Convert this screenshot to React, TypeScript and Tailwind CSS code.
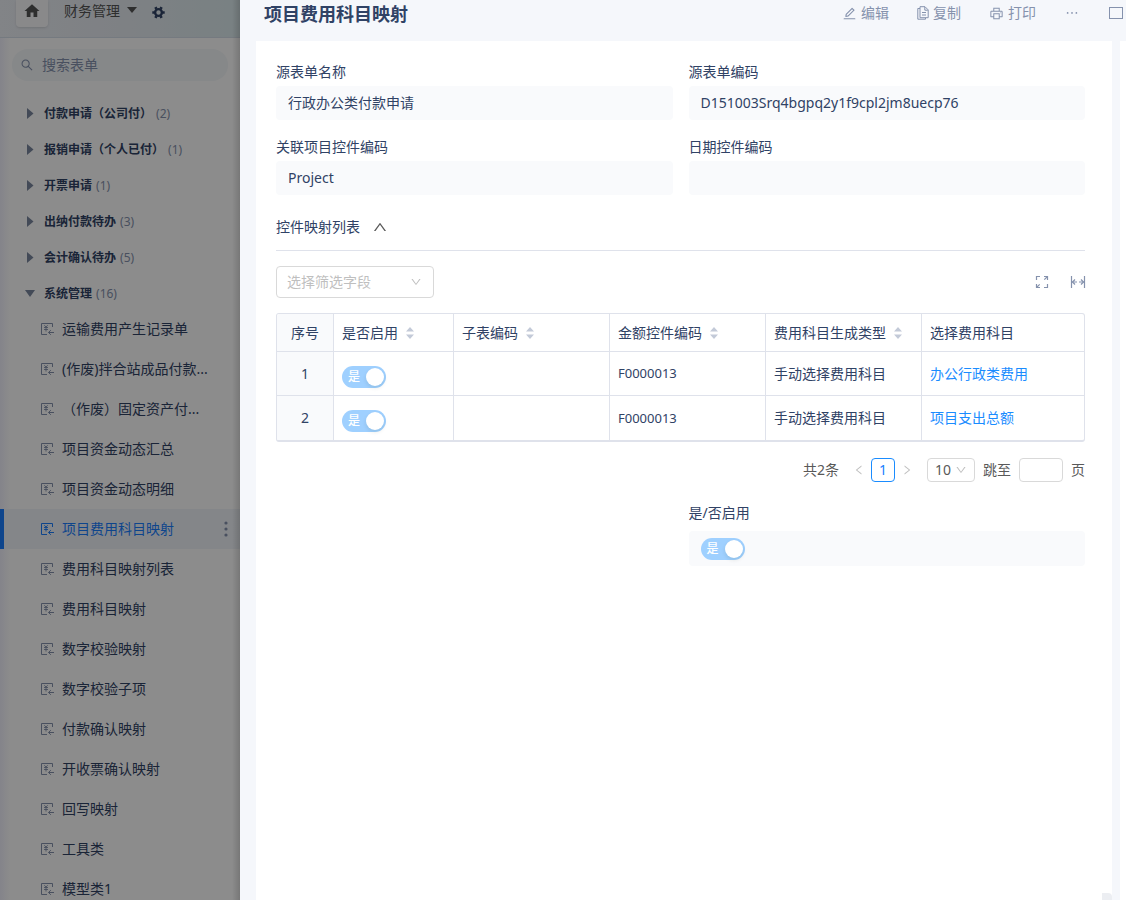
import { useState } from 'react';
import {
  AiOutlineDown,
  AiOutlineEdit,
  AiOutlineEllipsis,
  AiOutlineLeft,
  AiOutlinePrinter,
  AiOutlineRight,
  AiOutlineSearch,
  AiOutlineUp,
} from 'react-icons/ai';
import { MdHome } from 'react-icons/md';
import clsx from 'clsx';

const groups = [
  { name: '付款申请（公司付）', count: 2 },
  { name: '报销申请（个人已付）', count: 1 },
  { name: '开票申请', count: 1 },
  { name: '出纳付款待办', count: 3 },
  { name: '会计确认待办', count: 5 },
  { name: '系统管理', count: 16, open: true },
];

const forms = [
  '运输费用产生记录单',
  '(作废)拌合站成品付款...',
  '（作废）固定资产付...',
  '项目资金动态汇总',
  '项目资金动态明细',
  '项目费用科目映射',
  '费用科目映射列表',
  '费用科目映射',
  '数字校验映射',
  '数字校验子项',
  '付款确认映射',
  '开收票确认映射',
  '回写映射',
  '工具类',
  '模型类1',
];

const columns = [
  { title: '是否启用', sortable: true },
  { title: '子表编码', sortable: true },
  { title: '金额控件编码', sortable: true },
  { title: '费用科目生成类型', sortable: true },
  { title: '选择费用科目', sortable: false },
];

const rows = [
  { child: '', amount: 'F0000013', type: '手动选择费用科目', subject: '办公行政类费用' },
  { child: '', amount: 'F0000013', type: '手动选择费用科目', subject: '项目支出总额' },
];

function FormIcon() {
  return (
    <svg width="13" height="13" viewBox="0 0 13 13" fill="none" stroke="currentColor" className="shrink-0">
      <path d="M11.5 4V.5H.5v11H6" />
      <path d="M3.3 2.2l1.7 1.8 1.7-1.8M3 4.5h4M3 6.5h4M5 4.5V8.5" strokeWidth=".9" />
      <path d="M13 9.5H7.5M9.8 7.2L7.5 9.5l2.3 2.3" />
    </svg>
  );
}

function GearIcon() {
  return (
    <svg width="13" height="13" viewBox="0 0 13 13" fill="none" stroke="currentColor">
      <circle cx="6.5" cy="6.5" r="3.4" strokeWidth="2.4" />
      <path d="M.3 6.5h2M10.7 6.5h2M3.4 1.1l1 1.8M8.6 10.1l1 1.8M9.6 1.1l-1 1.8M4.4 10.1l-1 1.8" strokeWidth="2.6" />
    </svg>
  );
}

function CopyIcon() {
  return (
    <svg width="12" height="14" viewBox="0 0 12 14" fill="none" stroke="currentColor">
      <path d="M3 2.5H.8v10.7h7.7V11.8" />
      <path d="M3 .7h5l3.2 3.2v7.8H3z" />
      <path d="M7.8 1v3.2h3M5 6.5h4M5 9h4" />
    </svg>
  );
}

function ExpandIcon() {
  return (
    <svg width="14" height="14" viewBox="0 0 14 14" fill="none" stroke="currentColor" strokeWidth="1.2">
      <path d="M1.5 5V1.5H5M9 1.5h3.5V5M12.5 9v3.5H9M5 12.5H1.5V9" />
      <path d="M12.5 1.5L9.3 4.7M1.5 12.5l3.2-3.2" />
    </svg>
  );
}

function FitWidthIcon() {
  return (
    <svg width="16" height="14" viewBox="0 0 16 14" fill="none" stroke="currentColor" strokeWidth="1.2">
      <path d="M1.5 1v12M14.5 1v12M2 7h5M9 7h5" />
      <path d="M5 4.5L2.5 7 5 9.5M11 4.5L13.5 7 11 9.5" />
    </svg>
  );
}

function SortIcon() {
  return (
    <svg width="8" height="12" viewBox="0 0 8 12" fill="#c3cad8">
      <path d="M4 0l4 4.5H0zM4 12l4-4.5H0z" />
    </svg>
  );
}

function Switch({ label }: { label: string }) {
  return (
    <label className="flex h-[22px] w-11 items-center justify-between rounded-full bg-[#9fd0ff] pr-0.5 pl-1.5">
      <input type="checkbox" role="switch" className="sr-only" aria-label={label} checked disabled readOnly />
      <span className="text-xs font-medium text-white">是</span>
      <span className="size-[18px] rounded-full bg-white shadow-[0_2px_4px_rgba(0,35,11,0.1)]" />
    </label>
  );
}

function Field({ id, label, value }: { id: string; label: string; value: string }) {
  return (
    <div className="flex flex-col gap-[3px]">
      <label htmlFor={id} className="leading-[22px]">
        {label}
      </label>
      <input id={id} readOnly value={value} className="h-[34px] w-full rounded bg-[#f9fafc] px-3 pb-0.5 outline-none" />
    </div>
  );
}

function Sidebar() {
  const [active, setActive] = useState('项目费用科目映射');

  return (
    <aside className="relative flex h-screen w-60 shrink-0 flex-col overflow-hidden bg-[linear-gradient(90deg,#f0f0fc,#fff_10px)]">
      <header className="flex h-[38px] shrink-0 items-start border-b border-[#d5dfea] bg-linear-to-r from-[#edf0f6] via-[#e6ebf1] to-[#dcebee] pl-4">
        <button aria-label="首页" className="flex h-[27px] w-8 justify-center rounded-b bg-white/70 pt-0.5 text-[#555] shadow-sm">
          <MdHome size={18} />
        </button>
        <button className="ml-4 flex items-center text-sm leading-[22px] text-[#555]">
          财务管理
          <svg width="10" height="6" viewBox="0 0 10 6" className="mb-0.5 ml-[7px]" fill="currentColor">
            <path d="M0 0h10L5 6z" />
          </svg>
        </button>
        <button aria-label="设置" className="ml-[15px] pt-1.5 text-[#304265]">
          <GearIcon />
        </button>
      </header>

      <label className="mx-3 mt-[11px] flex h-8 shrink-0 items-center gap-2 rounded-full bg-[#f4f7fa] px-2 text-[#8592ad]">
        <AiOutlineSearch size={14} />
        <input placeholder="搜索表单" aria-label="搜索表单" className="min-w-0 flex-1 text-sm outline-none placeholder:text-[#8592ad]" />
      </label>

      <nav className="mt-[17px] flex flex-col">
        <div className="-mb-px flex flex-col gap-1">
          {groups.map(group => (
            <button key={group.name} className="flex h-8 items-center pl-[25px] text-left text-xs">
              <svg width="10" height="12" viewBox="0 0 10 12" fill="#7a879f" className="shrink-0">
                {group.open ? <path d="M0 2h10L5 9z" /> : <path d="M2 0v11l6.5-5.5z" />}
              </svg>
              <span className="ml-[9px] font-bold text-[#304265]">{group.name}</span>
              <span className="ml-1 text-[#8592ad]">({group.count})</span>
            </button>
          ))}
        </div>
        {forms.map(form => (
          <div
            key={form}
            className={clsx(
              'flex h-10 shrink-0 items-center border-l-4 pr-2',
              form === active ? 'border-[#1a7fff] bg-[#f0f4fa] text-[#1a7fff]' : 'border-transparent text-[#304265]',
            )}
          >
            <button onClick={() => setActive(form)} className="flex flex-1 items-center gap-2 pl-[37px] text-left text-sm">
              <span className={clsx(form !== active && 'text-[#8592ad]')}>
                <FormIcon />
              </span>
              {form}
            </button>
            {form === active && (
              <button aria-label="更多操作" className="px-1 text-[#8592ad]">
                <svg width="4" height="16" viewBox="0 0 4 16" fill="currentColor">
                  <circle cx="2" cy="2" r="1.6" />
                  <circle cx="2" cy="8" r="1.6" />
                  <circle cx="2" cy="14" r="1.6" />
                </svg>
              </button>
            )}
          </div>
        ))}
      </nav>

      {/* Drawer mask */}
      <div className="pointer-events-none absolute inset-0 bg-black/45" />
      <div className="pointer-events-none absolute inset-y-0 right-0 w-2 bg-linear-to-l from-black/15 to-transparent" />
    </aside>
  );
}

function MappingTable() {
  return (
    <div className="mt-[15px] overflow-hidden rounded-[3px] border border-b-2 border-[#dfe2eb]">
      <table className="w-full table-fixed border-separate border-spacing-0 text-left">
        <colgroup>
          <col className="w-[57px]" />
          <col className="w-[120px]" />
          <col className="w-[156px]" />
          <col className="w-[156px]" />
          <col className="w-[156px]" />
          <col />
        </colgroup>
        <thead>
          <tr className="h-[38px]">
            <th className="border-r border-b border-[#dfe2eb] bg-[#f9fafc] text-center font-normal">序号</th>
            {columns.map(col => (
              <th key={col.title} className="border-r border-b border-[#dfe2eb] px-2 font-normal last:border-r-0">
                <span className="flex items-center gap-2">
                  {col.title}
                  {col.sortable && <SortIcon />}
                </span>
              </th>
            ))}
          </tr>
        </thead>
        <tbody>
          {rows.map((row, index) => (
            <tr key={index} className="h-11 *:border-r *:border-b *:border-[#dfe2eb] *:px-2 last:*:border-b-0">
              <td className="bg-[#f9fafc] text-center">{index + 1}</td>
              <td>
                <div className="pt-1.5">
                  <Switch label={`是否启用 ${index + 1}`} />
                </div>
              </td>
              <td>{row.child}</td>
              <td className="text-[13px]">{row.amount}</td>
              <td>{row.type}</td>
              <td className="last:border-r-0">
                <a href="#" className="text-[#1a8cff]">
                  {row.subject}
                </a>
              </td>
            </tr>
          ))}
        </tbody>
      </table>
    </div>
  );
}

function Pagination() {
  return (
    <div className="mt-4 flex h-6 items-center justify-end gap-2 text-[#595959]">
      <span>共2条</span>
      <div className="flex items-center gap-1.5 px-1.5 text-[#bfbfbf]">
        <button aria-label="上一页">
          <AiOutlineLeft size={12} />
        </button>
        <button className="size-6 rounded border border-[#1a8cff] leading-[22px] text-[#1a7fff]">1</button>
        <button aria-label="下一页">
          <AiOutlineRight size={12} />
        </button>
      </div>
      <div className="relative">
        <select aria-label="每页条数" className="block h-6 w-12 appearance-none rounded border border-[#d9d9d9] pl-[7px] outline-none">
          <option>10</option>
          <option>20</option>
          <option>50</option>
        </select>
        <AiOutlineDown size={12} className="pointer-events-none absolute top-1.5 right-2 text-[#bfbfbf]" />
      </div>
      <label htmlFor="jump">跳至</label>
      <input id="jump" className="h-6 w-11 rounded border border-[#d9d9d9] px-2 outline-none" />
      <span>页</span>
    </div>
  );
}

export default function App() {
  const [expanded, setExpanded] = useState(true);

  return (
    <div className="flex h-screen overflow-hidden bg-[#f5f7fb] font-['Noto_Sans','Noto_Sans_CJK_SC',sans-serif] text-sm text-[#304265]">
      <Sidebar />

      <main className="flex min-w-0 flex-1 flex-col">
        <header className="flex h-[41px] shrink-0 items-start pr-0.5 pl-6">
          <h1 className="text-lg font-bold">项目费用科目映射</h1>
          <div className="ml-auto flex h-[26px] items-center gap-7 text-[#8592ad]">
            <button className="flex items-center gap-1">
              <AiOutlineEdit size={15} />
              编辑
            </button>
            <button className="flex items-center gap-1">
              <CopyIcon />
              复制
            </button>
            <button className="flex items-center gap-1">
              <AiOutlinePrinter size={15} />
              打印
            </button>
            <button aria-label="更多">
              <AiOutlineEllipsis size={16} />
            </button>
            <button aria-label="窗口模式">
              <svg width="16" height="12" viewBox="0 0 16 12" fill="none" stroke="currentColor">
                <rect x="1.5" y=".5" width="13" height="11" />
              </svg>
            </button>
          </div>
        </header>

        <div className="flex min-h-0 flex-1 gap-2 pl-4">
          <section className="flex min-w-0 flex-1 flex-col bg-white">
            <div className="pt-5 pr-[27px] pl-5">
              <div className="grid grid-cols-2 gap-4">
                <Field id="source-name" label="源表单名称" value="行政办公类付款申请" />
                <Field id="source-code" label="源表单编码" value="D151003Srq4bgpq2y1f9cpl2jm8uecp76" />
                <Field id="project-code" label="关联项目控件编码" value="Project" />
                <Field id="date-code" label="日期控件编码" value="" />
              </div>

              <div className="mt-4 h-10 border-b border-[#dfe2eb]">
                <button onClick={() => setExpanded(!expanded)} className="flex h-8 items-center gap-3">
                  控件映射列表
                  <AiOutlineUp size={16} className={clsx('text-[#595959]', !expanded && 'rotate-180')} />
                </button>
              </div>

              {expanded && (
                <>
                  <div className="mt-[15px] flex items-center justify-between">
                    <div className="relative">
                      <select
                        aria-label="选择筛选字段"
                        className="block h-8 w-[158px] appearance-none rounded border border-[#d9d9d9] px-2.5 text-[#bfbfbf] outline-none"
                      >
                        <option>选择筛选字段</option>
                      </select>
                      <AiOutlineDown size={12} className="pointer-events-none absolute top-2.5 right-3 text-[#bfbfbf]" />
                    </div>
                    <div className="-mr-px flex gap-[21px] text-[#8592ad]">
                      <button aria-label="全屏">
                        <ExpandIcon />
                      </button>
                      <button aria-label="自适应列宽">
                        <FitWidthIcon />
                      </button>
                    </div>
                  </div>
                  <MappingTable />
                  <Pagination />
                </>
              )}

              <div className="mt-5 grid grid-cols-2 gap-4">
                <div className="col-start-2 flex flex-col gap-[7px]">
                  <span className="leading-[22px]">是/否启用</span>
                  <div className="flex h-[35px] items-center rounded bg-[#f9fafc] px-3">
                    <Switch label="是/否启用" />
                  </div>
                </div>
              </div>
            </div>
            <div className="mt-auto h-[7px] w-2.5 self-end rounded-tr-sm bg-[#eceef2]" />
          </section>
          <div className="w-1.5 bg-white" />
        </div>
      </main>
    </div>
  );
}
